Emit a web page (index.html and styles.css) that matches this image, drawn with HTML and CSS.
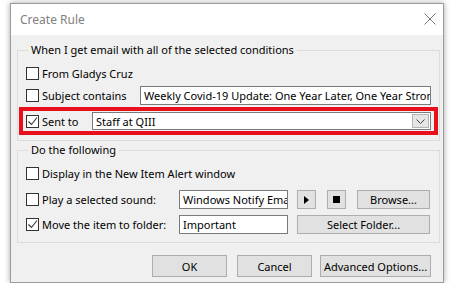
FILE: index.html
```html
<!DOCTYPE html>
<html lang="en">
<head>
    <meta charset="UTF-8">
    <title>Create Rule</title>
    <link rel="stylesheet" href="styles.css">
</head>
<body>
    <div class="dialog">
        <!-- Title bar -->
        <div class="titlebar">
            <span class="title">Create Rule</span>
            <svg class="close" width="12" height="12" viewBox="0 0 12 12">
                <path d="M0.5 0.5 L11.5 11.5 M11.5 0.5 L0.5 11.5" stroke="#7a7a7a" stroke-width="1" fill="none"/>
            </svg>
        </div>

        <div class="body">
            <!-- Conditions -->
            <fieldset class="group conditions">
                <legend>When I get email with all of the selected conditions</legend>
                <div class="row first">
                    <label class="check"><span class="box"></span>From Gladys Cruz</label>
                </div>
                <div class="row">
                    <label class="check w-subject"><span class="box"></span>Subject contains</label>
                    <div class="field subject-field">Weekly Covid-19 Update: One Year Later, One Year Stronger</div>
                </div>
                <div class="row highlight">
                    <label class="check w-sent">
                        <span class="box"><svg width="11" height="11" viewBox="0 0 11 11"><path d="M1.5 5.5 L4.5 8.5 L10 1.5" stroke="#333" stroke-width="1.1" fill="none"/></svg></span>Sent to
                    </label>
                    <div class="combo">
                        <span>Staff at QIII</span>
                        <span class="drop"><svg width="9" height="5" viewBox="0 0 9 5"><path d="M0.5 0.5 L4.5 4.5 L8.5 0.5" stroke="#444" stroke-width="1" fill="none"/></svg></span>
                    </div>
                </div>
            </fieldset>

            <!-- Actions -->
            <fieldset class="group actions">
                <legend>Do the following</legend>
                <div class="row first">
                    <label class="check"><span class="box"></span>Display in the New Item Alert window</label>
                </div>
                <div class="row sound">
                    <label class="check w-action"><span class="box"></span>Play a selected sound:</label>
                    <div class="field short">Windows Notify Email.wav</div>
                    <button class="btn icon-btn play"><svg width="5" height="8" viewBox="0 0 5 8"><path d="M0 0 L5 4 L0 8 Z" fill="#000"/></svg></button>
                    <button class="btn icon-btn stop"><svg width="7" height="7" viewBox="0 0 7 7"><rect width="7" height="7" fill="#000"/></svg></button>
                    <button class="btn browse">Browse...</button>
                </div>
                <div class="row folder">
                    <label class="check w-action">
                        <span class="box"><svg width="11" height="11" viewBox="0 0 11 11"><path d="M1.5 5.5 L4.5 8.5 L10 1.5" stroke="#333" stroke-width="1.1" fill="none"/></svg></span>Move the item to folder:
                    </label>
                    <div class="field short">Important</div>
                    <button class="btn select-folder">Select Folder...</button>
                </div>
            </fieldset>

            <!-- Dialog buttons -->
            <div class="footer">
                <button class="btn ok">OK</button>
                <button class="btn cancel">Cancel</button>
                <button class="btn advanced">Advanced Options...</button>
            </div>
        </div>
    </div>
</body>
</html>
```

FILE: styles.css
```css
/* Page */
body {
    margin: 0;
    padding: 3px 0 0 10px;
    background: #ffffff;
    font-family: 'Noto Sans', 'Liberation Sans', sans-serif;
    font-size: 11px;
    color: #000;
}

/* Window */
.dialog {
    box-sizing: border-box;
    width: 434px;
    height: 280px;
    border: 1px solid #9b9b9b;
    background: #f0f0f0;
    box-shadow: 0 0 6px rgba(0, 0, 0, 0.35);
    display: flex;
    flex-direction: column;
}

.titlebar {
    height: 31px;
    background: #fff;
    display: flex;
    align-items: center;
    justify-content: space-between;
    padding: 0 7px 0 9px;
}

.title {
    color: #808080;
    font-size: 12px;
}

.close {
    display: block;
    margin-top: -1px;
}

.body {
    padding: 7px 0 0 6px;
}

/* Group boxes */
.group {
    box-sizing: border-box;
    width: 423px;
    margin: 0;
    border: 1px solid #dcdcdc;
    padding: 0 8px 5px 8px;
    min-width: 0;
}

.group legend {
    padding: 0 3px;
    margin-left: 2px;
    line-height: 16px;
}

.actions {
    margin-top: 1px;
    padding-bottom: 8px;
}

.row {
    display: flex;
    align-items: center;
    height: 19px;
    margin-top: 3px;
}

.row.first {
    margin-top: 6px;
}

.actions .sound {
    margin-top: 7px;
}

.actions .folder {
    margin-top: 6px;
}

/* Red highlight around the "Sent to" condition */
.row.highlight {
    height: 18px;
    margin: 2px -7px 0 -7px;
    padding: 1px 3px;
    border: 4px solid #e8101a;
}

/* Checkboxes */
.check {
    display: flex;
    align-items: center;
    white-space: nowrap;
}

.box {
    box-sizing: border-box;
    width: 13px;
    height: 13px;
    border: 1px solid #333;
    background: #fff;
    margin-right: 3px;
    display: flex;
    align-items: center;
    justify-content: center;
}

.w-subject { width: 114px; flex: none; }
.w-sent { width: 66px; flex: none; }
.w-action { width: 153px; flex: none; }

/* Text fields */
.field {
    box-sizing: border-box;
    height: 19px;
    border: 1px solid #7a7a7a;
    background: #fff;
    padding: 0 0 0 3px;
    line-height: 17px;
    white-space: nowrap;
    overflow: hidden;
    min-width: 0;
}

.subject-field {
    flex: 1;
}

.field.short {
    width: 109px;
    flex: none;
}

.combo {
    box-sizing: border-box;
    flex: 1;
    min-width: 0;
    height: 18px;
    border: 1px solid #7a7a7a;
    background: #fff;
    display: flex;
    align-items: center;
    justify-content: space-between;
    padding: 0 1px 0 3px;
}

.drop {
    box-sizing: border-box;
    width: 17px;
    height: 14px;
    background: #e5e5e5;
    border: 1px solid #b4b4b4;
    display: flex;
    align-items: center;
    justify-content: center;
}

/* Buttons */
.btn {
    box-sizing: border-box;
    height: 19px;
    border: 1px solid #adadad;
    background: #e1e1e1;
    font-family: inherit;
    font-size: 11px;
    color: #000;
    padding: 0;
    white-space: nowrap;
    display: flex;
    align-items: center;
    justify-content: center;
    flex: none;
}

.icon-btn {
    width: 19px;
}

.play { margin-left: 9px; }
.stop { margin-left: 11px; }
.browse { width: 73px; margin-left: 11px; }
.select-folder { width: 133px; margin-left: 9px; }

.footer {
    display: flex;
    justify-content: flex-end;
    padding: 12px 12px 0 0;
}

.footer .btn {
    height: 22px;
}

.ok { width: 75px; }
.cancel { width: 75px; margin-left: 10px; }
.advanced { width: 111px; margin-left: 8px; }
```
